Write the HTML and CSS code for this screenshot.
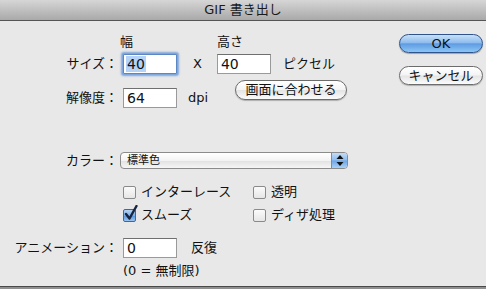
FILE: index.html
```html
<!DOCTYPE html>
<html>
<head>
  <title>GIF 書き出し</title>
  <link rel="stylesheet" href="styles.css">
</head>
<body>
  <div class="window">
    <div class="titlebar">GIF 書き出し</div>
    <div class="content">
      <div class="form">
        <div class="heads"><span class="head-w">幅</span><span class="head-h">高さ</span></div>
        <div class="row size-row">
          <label class="lbl">サイズ：</label>
          <div class="field focused"><span class="sel">40</span></div>
          <span class="times">X</span>
          <div class="field f2">40</div>
          <span class="unit-px">ピクセル</span>
        </div>
        <div class="row res-row">
          <label class="lbl">解像度：</label>
          <div class="field">64</div>
          <span class="unit-dpi">dpi</span>
          <button class="btn fit">画面に合わせる</button>
        </div>
        <div class="row color-row">
          <label class="lbl">カラー：</label>
          <div class="select">
            <span class="select-text">標準色</span>
            <span class="stepper">
              <svg width="8" height="11" viewBox="0 0 8 11"><path d="M4 0 L7.5 4 L0.5 4 Z M4 11 L7.5 7 L0.5 7 Z" fill="#111"/></svg>
            </span>
          </div>
        </div>
        <div class="checks">
          <div class="check"><span class="box"></span>インターレース</div>
          <div class="check"><span class="box"></span>透明</div>
          <div class="check"><span class="box checked"><svg class="tick" width="14" height="16" viewBox="0 0 14 16"><path d="M2 9 L5.5 13.5 L12.5 1" fill="none" stroke="#16253d" stroke-width="2.4" stroke-linecap="round" stroke-linejoin="round"/></svg></span>スムーズ</div>
          <div class="check"><span class="box"></span>ディザ処理</div>
        </div>
        <div class="row anim-row">
          <label class="lbl">アニメーション：</label>
          <div class="field">0</div>
          <span class="unit-rep">反復</span>
        </div>
        <div class="note">(0 = 無制限)</div>
      </div>
      <div class="actions">
        <button class="btn default">OK</button>
        <button class="btn cancel">キャンセル</button>
      </div>
    </div>
  </div>
</body>
</html>
```

FILE: styles.css
```css
body {
  margin: 0;
  background: #8f8f8f;
  font-family: "DejaVu Sans", "Noto Sans CJK JP", sans-serif;
  font-size: 13px;
  color: #111;
}
.window {
  width: 486px;
  height: 286px;
  background: #e8e8e8;
  border-bottom: 1px solid #4a4a4a;
  line-height: 16px;
  overflow: hidden;
}
.titlebar {
  height: 20px;
  line-height: 20px;
  text-align: center;
  background: linear-gradient(#d6d6d6, #a9a9a9);
  border-bottom: 1px solid #555;
  color: #1a1a1a;
}
.content {
  display: flex;
  align-items: flex-start;
}
.form {
  flex: 1;
  padding-top: 13px;
}
.heads {
  height: 16px;
  padding-left: 120px;
}
.head-h {
  margin-left: 84px;
}
.row {
  display: flex;
  align-items: center;
}
.lbl {
  width: 118px;
  flex: none;
  text-align: right;
}
.field {
  width: 49px;
  height: 18px;
  margin-left: 5px;
  padding-left: 3px;
  background: #fff;
  border: 1px solid #9a9a9a;
  border-top-color: #6f6f6f;
  font-size: 14px;
  line-height: 18px;
  flex: none;
}
.field.focused {
  border-color: #5b87c4;
  border-radius: 1px;
  box-shadow: 0 0 0 1px #7fa7dd, 0 0 2px 2px rgba(95, 145, 215, 0.75);
}
.sel {
  background: #b5d3f7;
  padding: 0 1px;
  margin-left: -1px;
}
.size-row {
  margin-top: 3px;
  height: 21px;
}
.times {
  margin-left: 16px;
}
.f2 {
  margin-left: 15px;
}
.unit-px {
  margin-left: 12px;
}
.res-row {
  margin-top: 14px;
  height: 20px;
}
.unit-dpi {
  margin-left: 11px;
}
.btn {
  font: inherit;
  padding: 0;
  color: #111;
  border-radius: 10px;
  cursor: pointer;
}
.fit, .cancel {
  background: linear-gradient(#ffffff 0%, #f4f4f4 48%, #e4e4e4 52%, #fbfbfb 100%);
  border: 1px solid #6c6c6c;
  box-shadow: 0 1px 1px rgba(0, 0, 0, 0.25);
}
.fit {
  align-self: flex-start;
  margin-top: -8px;
  margin-left: 27px;
  width: 112px;
  height: 20px;
  line-height: 18px;
}
.color-row {
  margin-top: 44px;
  height: 17px;
}
.select {
  margin-left: 2px;
  width: 228px;
  height: 17px;
  box-sizing: border-box;
  display: flex;
  align-items: center;
  border: 1px solid #8b8b8b;
  border-radius: 4px;
  background: linear-gradient(#ffffff 0%, #f3f3f3 50%, #e3e3e3 55%, #f6f6f6 100%);
  overflow: hidden;
}
.select-text {
  flex: 1;
  padding-left: 6px;
  font-size: 11px;
  line-height: 15px;
}
.stepper {
  width: 15px;
  height: 15px;
  display: flex;
  align-items: center;
  justify-content: center;
  border-left: 1px solid #6d8fc0;
  background: linear-gradient(#c3dcf6 0%, #8ebcee 48%, #6ea6e6 52%, #a9d0f6 100%);
}
.checks {
  margin-top: 13px;
  padding-left: 123px;
  display: grid;
  grid-template-columns: 130px auto;
  grid-auto-rows: 20px;
  row-gap: 3px;
}
.check {
  display: flex;
  align-items: center;
  gap: 5px;
}
.box {
  position: relative;
  width: 11px;
  height: 11px;
  border: 1px solid #8a8a8a;
  border-radius: 2px;
  background: linear-gradient(#fbfbfb, #e6e6e6);
  flex: none;
}
.box.checked {
  border-color: #3f679f;
  background: linear-gradient(#b6d3f4 0%, #7fb0ea 50%, #5c97de 55%, #98c6f3 100%);
}
.tick {
  position: absolute;
  left: 0;
  top: -5px;
}
.anim-row {
  margin-top: 13px;
  height: 20px;
}
.unit-rep {
  margin-left: 14px;
}
.note {
  margin-top: 5px;
  padding-left: 123px;
}
.actions {
  width: 84px;
  margin-right: 3px;
  padding-top: 13px;
  display: flex;
  flex-direction: column;
  gap: 13px;
}
.actions .btn {
  height: 19px;
  line-height: 17px;
}
.default {
  background: linear-gradient(#c7e0f8 0%, #8fbdee 45%, #5f9be2 52%, #8cc6f5 100%);
  border: 1px solid #2f548b;
  box-shadow: 0 1px 1px rgba(0, 0, 0, 0.3);
}
```
